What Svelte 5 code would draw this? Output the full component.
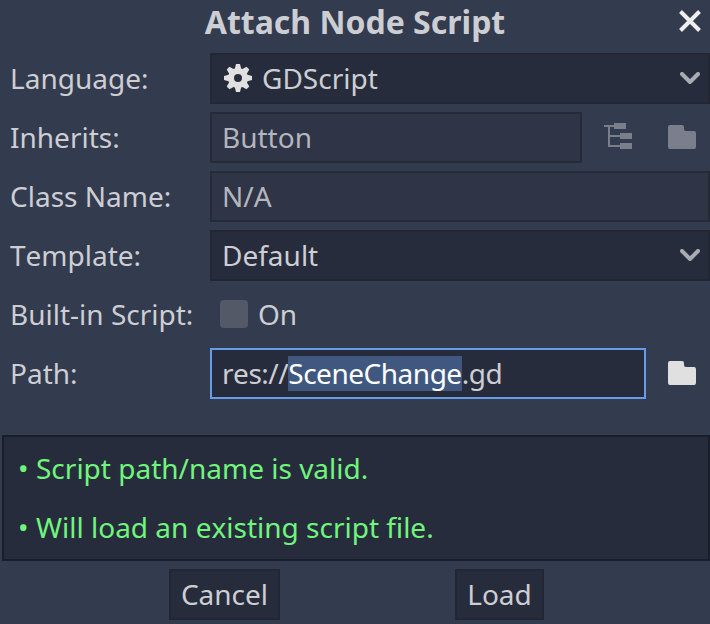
<script>
  let path = $state({ before: 'res://', selected: 'SceneChange', after: '.gd' });
  const messages = ['Script path/name is valid.', 'Will load an existing script file.'];
</script>

{#snippet chevron()}
  <svg class="chevron" width="20" height="12" viewBox="0 0 20 12"><path d="M2 2l8 8 8-8" /></svg>
{/snippet}

{#snippet folder()}
  <svg width="28" height="24" viewBox="0 0 28 24">
    <path fill="currentColor" d="M2 0h12a2 2 0 0 1 2 2v2a2 2 0 0 0 2 2h8a2 2 0 0 1 2 2v14a2 2 0 0 1-2 2H2a2 2 0 0 1-2-2V2a2 2 0 0 1 2-2z" />
  </svg>
{/snippet}

<div class="dialog">
  <header>
    <h1>Attach Node Script</h1>
    <svg class="close" width="22" height="22" viewBox="0 0 22 22"><path d="M1.5 1.5l19 19M20.5 1.5l-19 19" /></svg>
  </header>

  <div class="form">
    <div class="row">
      <span class="label">Language:</span>
      <div class="box option">
        <svg class="gear" width="32" height="32" viewBox="0 0 16 16">
          <path
            fill="#e0e0e0"
            fill-rule="evenodd"
            d="M7 1l-.564 2.258a5 5 0 0 0-.69.28L3.758 2.344 2.344 3.758l1.194 1.99a5 5 0 0 0-.28.688L1 7v2l2.258.564a5 5 0 0 0 .28.69l-1.194 1.988 1.414 1.414 1.99-1.194a5 5 0 0 0 .688.28L7 15h2l.564-2.258a5 5 0 0 0 .69-.28l1.988 1.194 1.414-1.414-1.194-1.99a5 5 0 0 0 .28-.688L15 9V7l-2.258-.564a5 5 0 0 0-.28-.69l1.194-1.988-1.414-1.414-1.99 1.194a5 5 0 0 0-.688-.28L9 1zM8 6a2 2 0 1 1 0 4 2 2 0 0 1 0-4z"
          />
        </svg>
        <span>GDScript</span>
        {@render chevron()}
      </div>
    </div>

    <div class="row">
      <span class="label">Inherits:</span>
      <div class="box readonly inherits">Button</div>
      <div class="icons dim">
        <svg width="28" height="26" viewBox="0 0 28 26" fill="currentColor">
          <path d="M0 2h10V0h12v6H10V4H6v8h10v-2h12v6H16v-2H6v8h10v-2h12v6H16v-2H4V4H0z" />
        </svg>
        {@render folder()}
      </div>
    </div>

    <div class="row">
      <span class="label">Class Name:</span>
      <div class="box readonly">N/A</div>
    </div>

    <div class="row">
      <span class="label">Template:</span>
      <div class="box option"><span>Default</span>{@render chevron()}</div>
    </div>

    <div class="row">
      <span class="label">Built-in Script:</span>
      <div class="check"><i></i>On</div>
    </div>

    <div class="row">
      <span class="label">Path:</span>
      <div class="box focused"><span>{path.before}</span><mark>{path.selected}</mark><span>{path.after}</span></div>
      <div class="icons">{@render folder()}</div>
    </div>
  </div>

  <div class="status">
    {#each messages as message}
      <p><span class="bullet">•</span>{message}</p>
    {/each}
  </div>

  <footer>
    <button class="cancel">Cancel</button>
    <button class="load">Load</button>
  </footer>
</div>

<style>
  :global(body) {
    margin: 0;
    background: #333b4f;
  }
  .dialog {
    display: flex;
    flex-direction: column;
    width: 710px;
    height: 624px;
    overflow: hidden;
    box-sizing: border-box;
    background: #333b4f;
    color: #cdced3;
    font: 28px/38px 'Noto Sans', sans-serif;
    font-kerning: none;
    white-space: nowrap;
  }
  header {
    position: relative;
    height: 53px;
  }
  h1 {
    margin: 0;
    font-size: 32px;
    line-height: 44px;
    font-weight: 700;
    text-align: center;
  }
  .close {
    position: absolute;
    right: 9px;
    top: 10px;
  }
  .close path {
    stroke: #efefef;
    stroke-width: 4;
  }
  .form {
    display: flex;
    flex-direction: column;
    gap: 8px;
  }
  .row {
    display: flex;
    height: 51px;
    align-items: center;
  }
  .label {
    flex: 0 0 200px;
    padding: 0 0 1px 10px;
  }
  .box {
    flex: 1;
    display: flex;
    align-items: center;
    box-sizing: border-box;
    height: 51px;
    padding: 0 8px 1px 10px;
    border: 2px solid #222733;
    background: #272c3c;
  }
  .readonly {
    background: #2f3447;
    border-color: #252b39;
    color: #b4b6bd;
  }
  .inherits {
    flex: 0 0 372px;
  }
  .gear {
    margin-right: 8px;
  }
  .chevron {
    margin-left: auto;
  }
  .chevron path {
    fill: none;
    stroke: #a9abb1;
    stroke-width: 4;
    stroke-linecap: round;
    stroke-linejoin: round;
  }
  .icons {
    display: flex;
    align-items: center;
    gap: 36px;
    margin-left: 22px;
    color: #e0e0e0;
  }
  .icons svg {
    position: relative;
    top: -0.5px;
  }
  .dim {
    color: #7b7f8b;
  }
  .dim svg:first-child {
    top: -1.5px;
  }
  .check {
    display: flex;
    align-items: center;
    gap: 10px;
    padding: 0 0 1px 10px;
  }
  .check i {
    width: 28px;
    height: 28px;
    border-radius: 4px;
    background: #545968;
  }
  .focused {
    flex: 0 0 436px;
    border-color: #699ce8;
    letter-spacing: -0.48px;
  }
  mark {
    margin-top: 1px;
    padding-bottom: 1px;
    background: #40587f;
    color: #fff;
    line-height: 34px;
  }
  .status {
    box-sizing: border-box;
    height: 126px;
    margin: 36px 0 8px 2px;
    padding: 1px 14px;
    border: 2px solid #1a1e28;
    background: #272c3c;
    color: #70f57c;
  }
  .status p {
    display: flex;
    align-items: center;
    margin: 0;
    height: 59px;
  }
  .bullet {
    width: 18px;
  }
  footer {
    display: flex;
    justify-content: space-between;
    padding: 0 166px 0 169px;
  }
  button {
    box-sizing: border-box;
    height: 51px;
    padding: 0 0 1px;
    border: 2px solid #222733;
    background: #272c3c;
    color: inherit;
    font: inherit;
    font-kerning: none;
  }
  .cancel {
    width: 111px;
  }
  .load {
    width: 89px;
  }
</style>
